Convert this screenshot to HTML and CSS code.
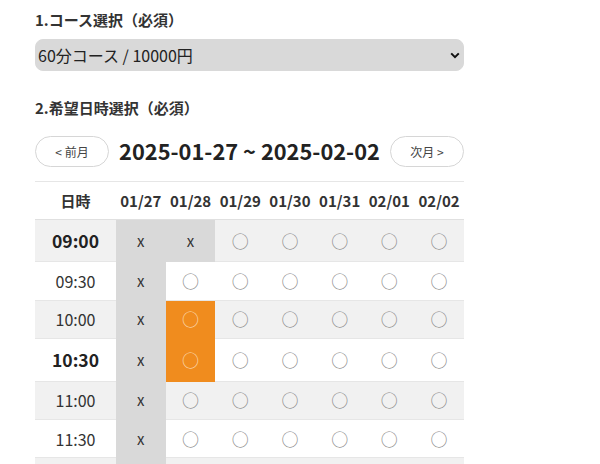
FILE: index.html
```html
<!DOCTYPE html>
<html lang="ja">
<head>
<meta charset="utf-8">
<link rel="stylesheet" href="styles.css">
</head>
<body>
<div class="page">
  <h2 class="label">1.コース選択（必須）</h2>
  <div class="select-wrap">
    <select class="select">
      <option>60分コース / 10000円</option>
    </select>
    <svg class="chevron" width="10" height="7" viewBox="0 0 10 7"><path d="M1.2 1.4 L5 5.2 L8.8 1.4" fill="none" stroke="#111" stroke-width="2"/></svg>
  </div>
  <h2 class="label label2">2.希望日時選択（必須）</h2>
  <div class="nav">
    <button class="navbtn">&lt; 前月</button>
    <div class="range">2025-01-27 ~ 2025-02-02</div>
    <button class="navbtn">次月 &gt;</button>
  </div>
  <table class="cal">
    <colgroup><col class="c-time"><col><col><col><col><col><col><col></colgroup>
    <thead>
      <tr><th>日時</th><th>01/27</th><th>01/28</th><th>01/29</th><th>01/30</th><th>01/31</th><th>02/01</th><th>02/02</th></tr>
    </thead>
    <tbody>
      <tr class="odd"><td class="time hour">09:00</td><td class="na">x</td><td class="na">x</td><td class="ok">○</td><td class="ok">○</td><td class="ok">○</td><td class="ok">○</td><td class="ok">○</td></tr>
      <tr><td class="time">09:30</td><td class="na">x</td><td class="ok">○</td><td class="ok">○</td><td class="ok">○</td><td class="ok">○</td><td class="ok">○</td><td class="ok">○</td></tr>
      <tr class="odd"><td class="time">10:00</td><td class="na">x</td><td class="ok sel">○</td><td class="ok">○</td><td class="ok">○</td><td class="ok">○</td><td class="ok">○</td><td class="ok">○</td></tr>
      <tr><td class="time hour">10:30</td><td class="na">x</td><td class="ok sel">○</td><td class="ok">○</td><td class="ok">○</td><td class="ok">○</td><td class="ok">○</td><td class="ok">○</td></tr>
      <tr class="odd"><td class="time">11:00</td><td class="na">x</td><td class="ok">○</td><td class="ok">○</td><td class="ok">○</td><td class="ok">○</td><td class="ok">○</td><td class="ok">○</td></tr>
      <tr><td class="time">11:30</td><td class="na">x</td><td class="ok">○</td><td class="ok">○</td><td class="ok">○</td><td class="ok">○</td><td class="ok">○</td><td class="ok">○</td></tr>
      <tr class="odd"><td class="time">12:00</td><td class="na">x</td><td class="ok">○</td><td class="ok">○</td><td class="ok">○</td><td class="ok">○</td><td class="ok">○</td><td class="ok">○</td></tr>
    </tbody>
  </table>
</div>
</body>
</html>
```

FILE: styles.css
```css
* { box-sizing: border-box; }
html, body { margin: 0; padding: 0; background: #fff; }
body {
  font-family: "Noto Sans CJK JP", "Noto Sans", sans-serif;
  color: #333;
}
.page {
  width: 429px;
  margin-left: 35px;
  padding-top: 10px;
}
.label {
  margin: 0;
  font-size: 15px;
  line-height: 20px;
  font-weight: 700;
  color: #333;
}
.label2 { margin-top: 27px; }
.select-wrap {
  position: relative;
  margin-top: 9px;
}
.select {
  display: block;
  width: 100%;
  height: 32px;
  appearance: none;
  -webkit-appearance: none;
  border: 1px solid #d9d9d9;
  border-radius: 8px;
  background: #d9d9d9;
  font-family: inherit;
  font-size: 16px;
  color: #222;
  padding: 0 0 0 2px;
}
.chevron {
  position: absolute;
  right: 4px;
  top: 13px;
}
.nav {
  display: flex;
  align-items: center;
  justify-content: space-between;
  margin-top: 18px;
  height: 31px;
}
.navbtn {
  width: 74px;
  height: 31px;
  border: 1px solid #d6d6d6;
  border-radius: 16px;
  background: #fff;
  font-family: inherit;
  font-size: 12px;
  color: #444;
  padding: 0;
}
.range {
  font-size: 21.8px;
  font-weight: 700;
  color: #222;
  line-height: 31px;
  margin-top: -2px;
}
.cal {
  margin-top: 14px;
  width: 429px;
  border-collapse: collapse;
  table-layout: fixed;
  border-top: 1px solid #e6e6e6;
}
.c-time { width: 81px; }
.cal th {
  height: 38px;
  font-size: 15px;
  font-weight: 700;
  color: #333;
  text-align: center;
  padding: 0;
  border-bottom: 1px solid #e0e0e0;
}
.cal td {
  text-align: center;
  padding: 7.7px 0;
  border-bottom: 1px solid #e6e6e6;
  font-size: 16px;
  line-height: 22px;
  vertical-align: middle;
}
.cal tr.odd td { background: #f1f1f1; }
.cal td.time { color: #333; }
.cal td.hour { font-size: 17.5px; font-weight: 700; color: #222; line-height: 26px; }
.cal td.na, .cal tr.odd td.na {
  background: #d9d9d9;
  border-bottom-color: #d9d9d9;
  color: #333;
  font-size: 15px;
}
.cal td.ok { color: #8a8a8a; font-size: 17px; line-height: 20px; }
.cal td.sel, .cal tr.odd td.sel {
  background: #f08c1e;
  border-bottom-color: #f08c1e;
  color: #fbd8b0;
}
```
